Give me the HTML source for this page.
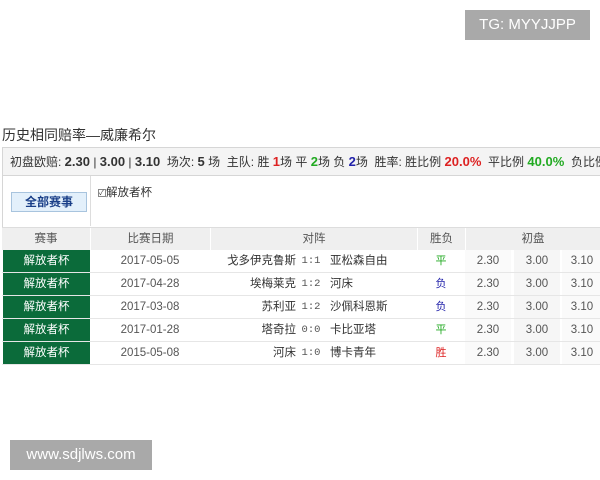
<!DOCTYPE html>
<html><head><meta charset="utf-8"><style>
*{margin:0;padding:0;box-sizing:border-box}
body{width:600px;height:480px;background:#fff;position:relative;overflow:hidden;font-family:"Liberation Sans","Noto Sans CJK SC",sans-serif;font-size:11px;color:#333}
.a{position:absolute;white-space:nowrap}
.wm{position:absolute;background:#a9a9a9;color:#fff;font-size:15px;text-align:center}
.row{position:absolute;left:2px;width:598px;height:23px;border-bottom:1px solid #e6e6e6}
.row div{position:absolute;top:0;height:22px;line-height:22px;white-space:nowrap}
</style></head><body>
<div class="wm" style="left:465px;top:10px;width:125px;height:30px;line-height:30px">TG: MYYJJPP</div>
<div class="wm" style="left:10px;top:440px;width:142px;height:30px;line-height:30px">www.sdjlws.com</div>

<div class="a" style="left:2px;top:125px;font-size:14px;color:#333">历史相同赔率—威廉希尔</div>
<div class="a" style="left:2px;top:147px;width:598px;height:29px;background:#f4f4f4;border:1px solid #d6d6d6;border-right:none;line-height:27px;padding-left:7px;font-size:12px">初盘欧赔: <b style="font-size:13px">2.30</b> | <b style="font-size:13px">3.00</b> | <b style="font-size:13px">3.10</b>&nbsp; 场次: <b style="font-size:13px">5</b> 场&nbsp; 主队: 胜 <b style="color:#d22;font-size:13px">1</b>场 平 <b style="color:#2a2;font-size:13px">2</b>场 负 <b style="color:#22a;font-size:13px">2</b>场&nbsp; 胜率: 胜比例 <b style="color:#d22;font-size:13px">20.0%</b>&nbsp; 平比例 <b style="color:#2a2;font-size:13px">40.0%</b>&nbsp; 负比例 -</div>
<div class="a" style="left:2px;top:176px;width:598px;height:51px;border-left:1px solid #d6d6d6"></div>
<div class="a" style="left:90px;top:176px;width:1px;height:50px;background:#ddd"></div>
<div class="a" style="left:11px;top:192px;width:76px;height:20px;background:#e3f0fb;border:1px solid #a8c4de;color:#1a3f88;font-weight:bold;font-size:12px;text-align:center;line-height:18px">全部赛事</div>
<div class="a" style="left:98px;top:184px;font-size:11.5px"><span style="display:inline-block;width:8px;height:8px;border:1px solid #888;font-size:7px;line-height:7px;vertical-align:1px">✓</span>解放者杯</div>
<div class="a" style="left:2px;top:227px;width:598px;height:23px;background:#efefef;border-top:1px solid #ddd;color:#555;font-size:11.5px;line-height:22px">
<div class="a" style="left:0;width:88px;text-align:center">赛事</div>
<div class="a" style="left:88px;width:120px;text-align:center;border-left:1px solid #fff">比赛日期</div>
<div class="a" style="left:208px;width:207px;text-align:center;border-left:1px solid #fff">对阵</div>
<div class="a" style="left:415px;width:48px;text-align:center;border-left:1px solid #fff">胜负</div>
<div class="a" style="left:463px;width:135px;text-align:center;border-left:1px solid #fff">初盘</div>
</div>
<div id="rows"></div>
<script>
var d=[["2017-05-05","戈多伊克鲁斯","1:1","亚松森自由","平","#2a2"],["2017-04-28","埃梅莱克","1:2","河床","负","#22a"],["2017-03-08","苏利亚","1:2","沙佩科恩斯","负","#22a"],["2017-01-28","塔奇拉","0:0","卡比亚塔","平","#2a2"],["2015-05-08","河床","1:0","博卡青年","胜","#d22"]];
var h="";d.forEach(function(r,i){var t=250+i*23;h+='<div class="row" style="top:'+t+'px"><div style="left:1px;width:87px;background:#0b6b3a;color:#fff;text-align:center;font-size:11.5px">解放者杯</div><div style="left:88px;width:120px;text-align:center;color:#555;font-size:11.5px">'+r[0]+'</div><div style="left:208px;width:86px;text-align:right;color:#333;font-size:11.5px">'+r[1]+'</div><div style="left:297px;width:24px;text-align:center;color:#555;font-family:Liberation Mono,monospace;font-size:10.5px">'+r[2]+'</div><div style="left:328px;color:#333;font-size:11.5px">'+r[3]+'</div><div style="left:415px;width:48px;text-align:center;color:'+r[5]+'">'+r[4]+'</div><div style="left:463px;width:46px;text-align:center;color:#555;background:#fafafa;font-size:11.5px">2.30</div><div style="left:512px;width:46px;text-align:center;color:#555;background:#f6f6f6;font-size:11.5px">3.00</div><div style="left:560px;width:40px;text-align:center;color:#555;background:#fafafa;font-size:11.5px">3.10</div></div>'});
document.getElementById("rows").innerHTML=h;
</script>
</body></html>
